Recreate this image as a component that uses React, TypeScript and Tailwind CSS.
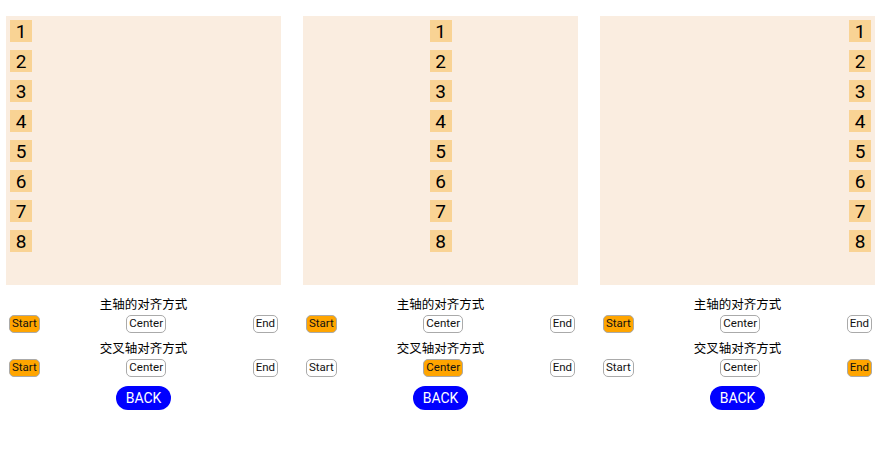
const items = [1, 2, 3, 4, 5, 6, 7, 8];
const opts = ["Start", "Center", "End"];

function Panel({ main, cross }: { main: number; cross: number }) {
  const align = ["items-start", "items-center", "items-end"][cross];
  return (
    <div className="w-[275px] flex flex-col items-stretch">
      <div className={`h-[269px] bg-[#faede0] p-[4px] flex flex-col gap-[8px] ${align}`}>
        {items.map((n) => (
          <div
            key={n}
            className="w-[22px] h-[22px] bg-[#f9d394] flex items-center justify-center font-['Roboto'] text-[19px] leading-none text-black"
          >
            {n}
          </div>
        ))}
      </div>
      <Group title="主轴的对齐方式" selected={main} className="mt-[12px]" />
      <Group title="交叉轴对齐方式" selected={cross} className="mt-[8px]" />
      <div className="flex justify-center mt-[9px]">
        <button className="h-[24px] px-[10px] rounded-full bg-[#0000ff] text-white font-['Roboto'] text-[14px] leading-none">
          BACK
        </button>
      </div>
    </div>
  );
}

function Group({ title, selected, className }: { title: string; selected: number; className: string }) {
  return (
    <div className={className}>
      <div className="text-center text-[12.5px] leading-[16px] text-black">{title}</div>
      <div className="flex justify-between px-[3px] mt-[2px]">
        {opts.map((o, i) => (
          <button
            key={o}
            className={`h-[18px] px-[2px] rounded-[5px] border border-[#aaa] font-['Roboto'] text-[11.5px] leading-none text-[#111] ${
              i === selected ? "bg-[#ffa500]" : "bg-white"
            }`}
          >
            {o}
          </button>
        ))}
      </div>
    </div>
  );
}

export default function App() {
  return (
    <div
      className="w-[884px] h-[456px] bg-white flex gap-[22px] pl-[6px] pt-[16px]"
      style={{ fontFamily: '"Noto Sans", "Noto Sans CJK SC", sans-serif' }}
    >
      <Panel main={0} cross={0} />
      <Panel main={0} cross={1} />
      <Panel main={0} cross={2} />
    </div>
  );
}
